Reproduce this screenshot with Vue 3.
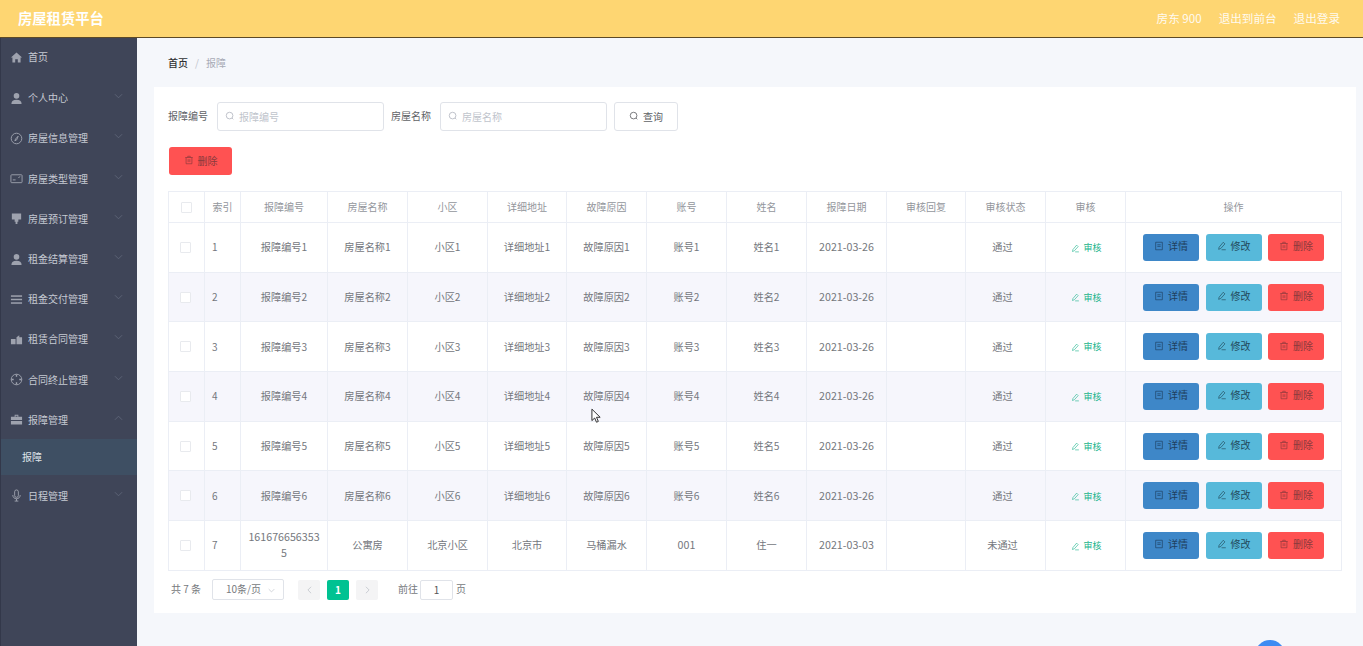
<script setup>
const menus = [
  { t: '首页', i: 'home', noArrow: true, h: 'first' },
  { t: '个人中心', i: 'user' },
  { t: '房屋信息管理', i: 'compass' },
  { t: '房屋类型管理', i: 'money' },
  { t: '房屋预订管理', i: 'sign' },
  { t: '租金结算管理', i: 'user' },
  { t: '租金交付管理', i: 'list' },
  { t: '租赁合同管理', i: 'office' },
  { t: '合同终止管理', i: 'globe' },
  { t: '报障管理', i: 'suitcase', open: true },
  { t: '日程管理', i: 'mic' }
]
const cols = [36, 36, 87, 80, 80, 79, 80, 80, 80, 80, 79, 80, 80, 216]
const heads = ['索引', '报障编号', '房屋名称', '小区', '详细地址', '故障原因', '账号', '姓名', '报障日期', '审核回复', '审核状态', '审核', '操作']
const rows = [1, 2, 3, 4, 5, 6].map((n) => ({
  n,
  c: [`报障编号${n}`, `房屋名称${n}`, `小区${n}`, `详细地址${n}`, `故障原因${n}`, `账号${n}`, `姓名${n}`, '2021-03-26', '', '通过']
}))
rows.push({ n: 7, c: ['1616766563535', '公寓房', '北京小区', '北京市', '马桶漏水', '001', '住一', '2021-03-03', '', '未通过'] })
const cellClass = (c, i) => ({ num: /^[\d-]+$/.test(c), status: i === 9 })
</script>

<template>
  <div class="page">
    <header class="top">
      <div class="brand">房屋租赁平台</div>
      <div class="top-links">
        <span>房东 900</span>
        <span>退出到前台</span>
        <span>退出登录</span>
      </div>
    </header>
    <div class="body">
      <aside class="side">
        <template v-for="m in menus" :key="m.t">
          <div class="menu" :class="m.h">
            <svg class="mi" viewBox="0 0 14 14">
              <path v-if="m.i === 'home'" d="M7 1.500 1 7h1.600v5.500h3V9h2.800v3.500h3V7H13z" fill="currentColor" />
              <g v-else-if="m.i === 'user'" fill="currentColor"><circle cx="7" cy="4.200" r="3" /><path d="M1.500 13c0-3.200 2-4.600 5.500-4.600s5.500 1.400 5.500 4.600z" /></g>
              <g v-else-if="m.i === 'compass'" fill="none" stroke="currentColor"><circle cx="7" cy="7" r="5.700" /><path d="M8.800 4.500 6 7.500l-.8 2 2-1z" /></g>
              <g v-else-if="m.i === 'money'" fill="none" stroke="currentColor"><rect x="1" y="3" width="12" height="8.500" rx=".8" /><path d="M3 8.500h3M9 6l2-1" /></g>
              <path v-else-if="m.i === 'sign'" d="M2 1.500h10v6.500H9v2.500H8V13H6v-2.500H5V8H2z" fill="currentColor" />
              <g v-else-if="m.i === 'list'" fill="currentColor"><rect x="1" y="2.500" width="12" height="1.600" /><rect x="1" y="6.200" width="12" height="1.600" /><rect x="1" y="10" width="12" height="1.600" /></g>
              <path v-else-if="m.i === 'office'" d="M1 6.500h5V12H1zM7 12V4.500l3-2v2h3V12z" fill="currentColor" />
              <g v-else-if="m.i === 'globe'" fill="none" stroke="currentColor"><circle cx="7" cy="7" r="5.700" /><path d="M7 1.500v2.500M7 10v2.500M1.500 7H4M10 7h2.500" stroke-width="1.500" /></g>
              <path v-else-if="m.i === 'suitcase'" d="M5 2h4v2h4v3.500H1V4h4zm1 1v1h2V3zM1 8.500h12V12.500H1z" fill="currentColor" />
              <g v-else fill="none" stroke="currentColor"><rect x="5" y="1" width="4" height="8" rx="2" /><path d="M3 6.500C3 9 4.800 10.500 7 10.500s4-1.500 4-4M7 10.500V13M5 13h4" /></g>
            </svg>
            <span class="mt">{{ m.t }}</span>
            <svg v-if="!m.noArrow" class="arrow" viewBox="0 0 10 6"><path :d="m.open ? 'M1 5l4-4 4 4' : 'M1 1l4 4 4-4'" fill="none" stroke="currentColor" /></svg>
          </div>
          <div v-if="m.open" class="sub">报障</div>
        </template>
      </aside>
      <main class="main">
        <nav class="crumb"><b>首页</b><i>/</i><span>报障</span></nav>
        <section class="card">
          <div class="search">
            <label>报障编号</label>
            <div class="input">
              <svg class="s" viewBox="0 0 12 12"><circle cx="5.500" cy="5.500" r="4" fill="none" stroke="currentColor" /><path d="m8.500 8.500 1.500 1.500" stroke="currentColor" /></svg>
              <span>报障编号</span>
            </div>
            <label>房屋名称</label>
            <div class="input">
              <svg class="s" viewBox="0 0 12 12"><circle cx="5.500" cy="5.500" r="4" fill="none" stroke="currentColor" /><path d="m8.500 8.500 1.500 1.500" stroke="currentColor" /></svg>
              <span>房屋名称</span>
            </div>
            <button class="query">
              <svg class="s dark" viewBox="0 0 12 12"><circle cx="5.500" cy="5.500" r="4" fill="none" stroke="currentColor" /><path d="m8.500 8.500 1.500 1.500" stroke="currentColor" /></svg>
              查询
            </button>
          </div>
          <button class="del-top">
            <svg class="bi" viewBox="0 0 12 12"><path d="M1.500 3h9M4.500 3V1.500h3V3M2.500 3v7.500h7V3M5 5v3.500M7 5v3.500" fill="none" stroke="currentColor" stroke-width=".8" /></svg>
            删除
          </button>
          <table class="grid">
            <colgroup><col v-for="(w, i) in cols" :key="i" :style="{ width: w + 'px' }" /></colgroup>
            <thead>
              <tr>
                <th><span class="cb head-cb"></span></th>
                <th v-for="h in heads" :key="h">{{ h }}</th>
              </tr>
            </thead>
            <tbody>
              <tr v-for="r in rows" :key="r.n">
                <td><span class="cb"></span></td>
                <td class="idx">{{ r.n }}</td>
                <td v-for="(c, i) in r.c" :key="i" class="cell" :class="cellClass(c, i)">{{ c }}</td>
                <td>
                  <span class="audit">
                    <svg viewBox="0 0 12 12"><path d="M7.500 1.500 9.500 3.500 4.500 9 2 10l.5-2.500zM5.500 10.500h5" fill="none" stroke="currentColor" stroke-width=".8" /></svg>
                    审核
                  </span>
                </td>
                <td>
                  <div class="ops">
                    <button class="op blue">
                      <svg class="bi" viewBox="0 0 12 12"><path d="M2 1.500h8v9H2zM4 4.500h4M4 6.500h4" fill="none" stroke="currentColor" stroke-width=".8" /></svg>
                      详情
                    </button>
                    <button class="op cyan">
                      <svg class="bi" viewBox="0 0 12 12"><path d="M7.500 1.500 9.500 3.500 4.500 9 2 10l.5-2.500zM5.500 10.500h5" fill="none" stroke="currentColor" stroke-width=".8" /></svg>
                      修改
                    </button>
                    <button class="op red">
                      <svg class="bi" viewBox="0 0 12 12"><path d="M1.500 3h9M4.500 3V1.500h3V3M2.500 3v7.500h7V3M5 5v3.500M7 5v3.500" fill="none" stroke="currentColor" stroke-width=".8" /></svg>
                      删除
                    </button>
                  </div>
                </td>
              </tr>
            </tbody>
          </table>
          <div class="pager">
            <span class="total">共 7 条</span>
            <div class="size">10条/页<svg viewBox="0 0 10 6"><path d="M1 1l4 4 4-4" fill="none" stroke="currentColor" /></svg></div>
            <span class="pbtn"><svg viewBox="0 0 6 10"><path d="M5 1 1 5l4 4" fill="none" stroke="currentColor" /></svg></span>
            <span class="pnum">1</span>
            <span class="pbtn"><svg viewBox="0 0 6 10"><path d="m1 1 4 4-4 4" fill="none" stroke="currentColor" /></svg></span>
            <span class="goto">前往</span>
            <span class="jump">1</span>
            <span class="page-word">页</span>
          </div>
        </section>
      </main>
    </div>
    <div class="fab"></div>
    <svg class="cursor" viewBox="0 0 12 17"><path d="M1 1v12.500l3-2.800 2 4.600 2-.9-2-4.500h4z" fill="#fff" stroke="#222" stroke-width="1" /></svg>
  </div>
</template>

<style>
html, body { margin: 0; overflow: hidden; }
</style>

<style scoped>
.page {
  position: relative;
  width: 1363px;
  height: 646px;
  overflow: hidden;
  display: flex;
  flex-direction: column;
  background: #f5f7fb;
  font-family: "Noto Sans CJK SC", "Noto Sans", sans-serif;
  font-size: 10px;
  color: #606266;
}
.top {
  flex: none;
  height: 35px;
  box-sizing: content-box;
  border-bottom: 1px solid #5d4a26;
  background: #fed672;
  display: flex;
  align-items: center;
  justify-content: space-between;
  padding: 0 23px 2px 18px;
}
.brand { color: #fff; font-size: 14.300px; font-weight: 700; }
.top-links { display: flex; gap: 17px; color: #fff; font-size: 11.600px; opacity: .9; }
.body { flex: 1; display: flex; min-height: 0; }
.side {
  flex: none;
  width: 137px;
  background: #3f4558;
  border-left: 1px solid #33384a;
  box-sizing: border-box;
  color: #c6cad3;
  padding-top: 1px;
}
.menu {
  height: 40.200px;
  box-sizing: border-box;
  display: flex;
  align-items: center;
  padding: 0 0 2px 9px;
  position: relative;
}
.menu.first { padding-bottom: 4px; }
.mi { width: 13px; height: 13px; margin-right: 5px; color: #9ea2ae; flex: none; }
.mt { font-size: 10px; line-height: 14px; }
.arrow { position: absolute; left: 113px; top: 14px; width: 9px; height: 6px; color: #5f6578; }
.sub {
  height: 36px;
  box-sizing: border-box;
  margin: -2px 0 2px;
  background: #3e4f63;
  display: flex;
  align-items: center;
  padding-left: 21px;
  color: #dfe3ea;
}
.main { flex: 1; min-width: 0; padding: 0 7px 0 17px; }
.crumb {
  height: 49px;
  display: flex;
  align-items: center;
  padding-left: 14px;
  gap: 7px;
  color: #a8abb6;
  box-sizing: border-box;
}
.crumb b { color: #303133; font-weight: 500; }
.crumb i { font-style: normal; color: #c0c4cc; }
.card {
  width: 1202px;
  height: 526px;
  box-sizing: border-box;
  background: #fff;
  padding: 15px 15px 0 14px;
}
.search { display: flex; align-items: center; height: 29px; }
.search label { width: 49px; color: #606266; padding-bottom: 2px; }
.input {
  width: 167px;
  height: 29px;
  box-sizing: border-box;
  border: 1px solid #e0e3e9;
  border-radius: 3px;
  display: flex;
  align-items: center;
  padding: 0 0 1px 7px;
  color: #c0c4cc;
  margin-right: 7px;
}
.s { width: 10px; height: 10px; margin-right: 4px; color: #b3b7c0; }
.s.dark { color: #606266; }
.query {
  width: 64px;
  height: 29px;
  border: 1px solid #e0e3e9;
  border-radius: 3px;
  background: #fff;
  color: #606266;
  font: inherit;
  display: flex;
  align-items: center;
  justify-content: center;
  padding: 0 0 1px;
}
.del-top {
  display: flex;
  align-items: center;
  justify-content: center;
  width: 63px;
  height: 28px;
  margin: 16px 0 0 1px;
  border: 0;
  border-radius: 3px;
  padding: 0 0 2px;
  background: #ff5252;
  color: #8a3a3c;
  font: inherit;
}
.bi { width: 10px; height: 10px; margin-right: 4px; }
.grid {
  width: 1173px;
  margin-top: 16px;
  border-collapse: collapse;
  table-layout: fixed;
}
.grid th, .grid td {
  border: 1px solid #ebeef5;
  padding: 0 7px;
  text-align: center;
  font-weight: 400;
  line-height: 16px;
  word-break: break-all;
}
.grid th { height: 30px; color: #93969c; white-space: nowrap; padding-left: 4px; padding-right: 4px; }
.grid td { height: 48.700px; color: #74777d; }
.grid tbody tr:nth-child(even) td { background: #f6f6fc; }
.grid td.idx { text-align: left; }
.grid td.cell { font-size: 10.200px; }
.grid td.cell.num { font-size: 10.700px; }
.grid td.cell.status { padding-right: 13px; }
.cb {
  display: block;
  width: 11px;
  height: 11px;
  box-sizing: border-box;
  border: 1px solid #e8eaee;
  border-radius: 1px;
  background: #fff;
  margin-left: 4px;
}
.head-cb { margin-left: 8px; }
.audit {
  color: #19b48b;
  display: inline-flex;
  align-items: center;
  font-size: 9px;
  position: relative;
  top: 1px;
  left: 1px;
}
.audit svg { width: 9px; height: 9px; margin-right: 3px; }
.ops { display: flex; gap: 6.500px; padding-left: 10px; }
.op {
  width: 56px;
  height: 27px;
  flex: none;
  border: 0;
  border-radius: 3px;
  padding: 0 0 2px;
  font: inherit;
  display: flex;
  align-items: center;
  justify-content: center;
}
.blue { background: #3e87c8; color: #1e3f5f; }
.cyan { background: #57b9da; color: #224a5a; }
.red { background: #ff5252; color: #8a3a3c; }
.pager { display: flex; align-items: center; height: 22px; margin-top: 8px; padding-left: 3px; color: #777a80; }
.total { width: 41px; padding-bottom: 2px; }
.size {
  width: 72px;
  height: 21px;
  box-sizing: border-box;
  border: 1px solid #e0e3e9;
  border-radius: 2px;
  display: flex;
  align-items: center;
  padding: 0 0 2px 13px;
  position: relative;
  margin-right: 14px;
}
.size svg { position: absolute; right: 8px; top: 8px; width: 7px; height: 5px; color: #c0c4cc; }
.pbtn {
  width: 22px;
  height: 20px;
  background: #f4f4f5;
  border-radius: 2px;
  display: flex;
  align-items: center;
  justify-content: center;
  color: #c0c4cc;
}
.pbtn svg { width: 5px; height: 8px; }
.pnum {
  width: 22px;
  height: 20px;
  margin: 0 7px;
  background: #00c292;
  border-radius: 2px;
  color: #fff;
  font-weight: 700;
  display: flex;
  align-items: center;
  justify-content: center;
}
.goto { margin-left: 20px; width: 22px; padding-bottom: 2px; }
.jump {
  width: 33px;
  height: 20px;
  box-sizing: border-box;
  border: 1px solid #e0e3e9;
  border-radius: 2px;
  display: flex;
  align-items: center;
  justify-content: center;
  color: #555;
}
.page-word { margin-left: 3px; padding-bottom: 2px; }
.fab {
  position: absolute;
  left: 1255px;
  top: 640px;
  width: 30px;
  height: 30px;
  border-radius: 50%;
  background: #3d8bf2;
}
.cursor {
  position: absolute;
  left: 591px;
  top: 408px;
  width: 11px;
  height: 16px;
}
</style>
